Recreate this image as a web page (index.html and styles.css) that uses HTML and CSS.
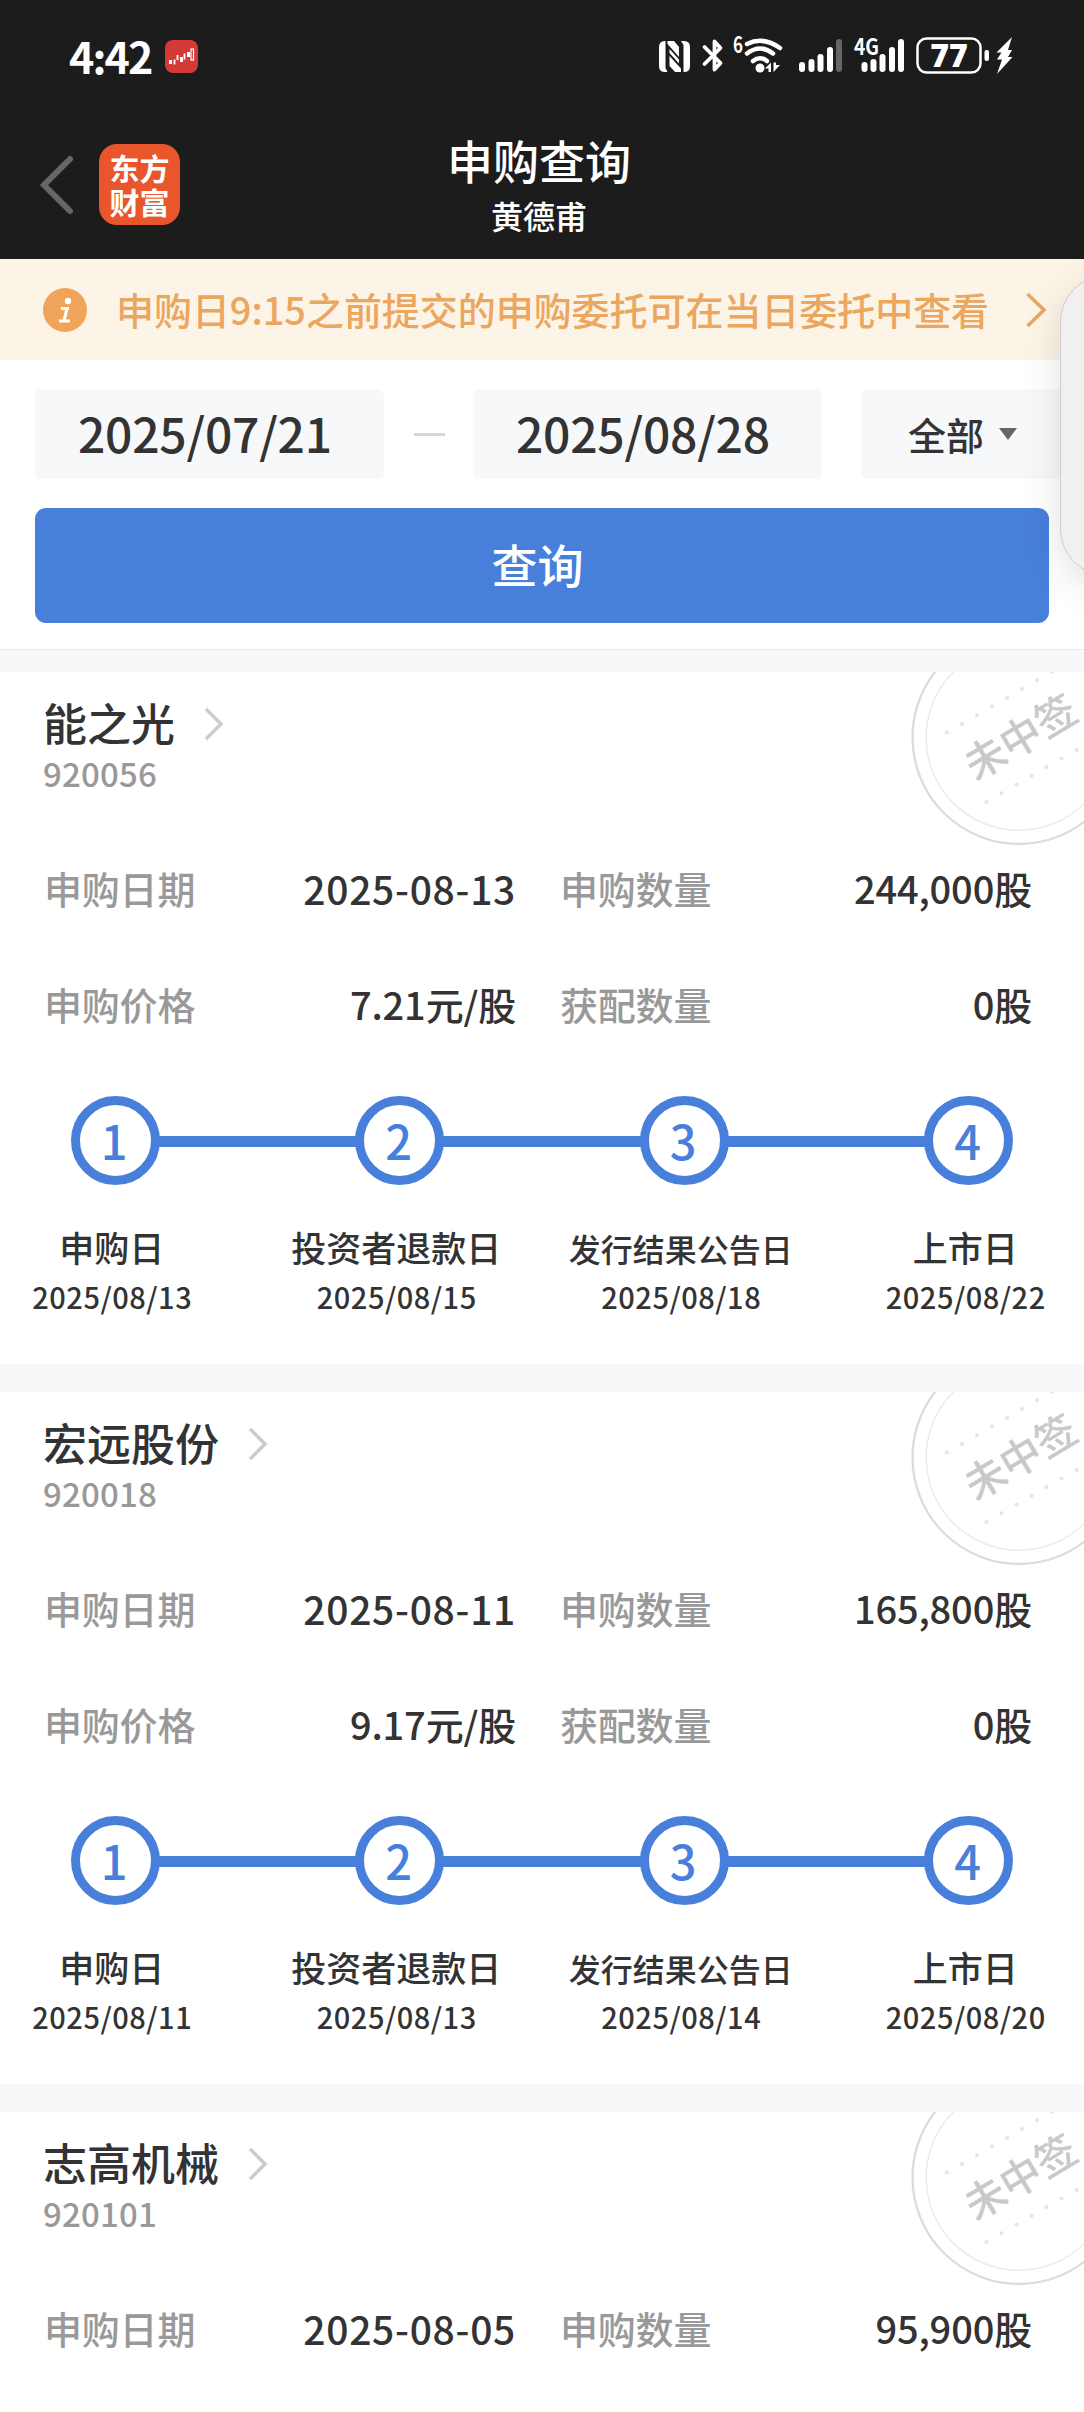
FILE: index.html
```html
<!DOCTYPE html>
<html lang="zh-CN">

<head>
    <meta charset="UTF-8">
    <meta name="viewport" content="width=device-width, initial-scale=1.0">
    <title>申购查询</title>
    <link rel="stylesheet" href="styles.css">
</head>

<body>
    <header class="header">
        <div class="status-bar">
            <div class="status-left">
                <span class="time">4:42</span>
                <svg class="app-icon" viewBox="0 0 33 33" width="33" height="33">
                    <rect width="33" height="33" rx="8" fill="#d43a35" />
                    <g fill="#fff">
                        <rect x="4" y="20" width="3" height="4" />
                        <rect x="15" y="17" width="3" height="5" />
                        <rect x="22" y="12" width="3" height="5" />
                    </g>
                    <g fill="none" stroke="#fff">
                        <path d="M9.500 19.500v5M12.500 15v5M19.500 13.500v6" stroke-width="1.800" />
                        <rect x="26" y="9" width="2.500" height="11" stroke-width="1.200" />
                    </g>
                </svg>
            </div>
            <svg class="status-icons" viewBox="0 0 360 50" width="360" height="50">
                <!-- nfc -->
                <g fill="#fff">
                    <path d="M15 11Q9 11 9 17V36Q9 42 15 42H17.500L15.500 38V11z" />
                    <path d="M34 42Q40 42 40 36V17Q40 11 34 11H31L33.500 15V42z" />
                    <path d="M17.500 11H24L29 17V27L17.500 14z" />
                    <path d="M31 42H25L19.500 36V26L31 38.500z" />
                    <path d="M19.500 19L29 29.500V33.500L19.500 23z" />
                </g>
                <!-- bluetooth -->
                <path d="M54.500 17L70.500 33L64.500 39.500V11.500L70.500 18L54.500 34" fill="none" stroke="#fff" stroke-width="3.800" stroke-linejoin="round" stroke-linecap="round" />
                <text x="83" y="23" textLength="10" lengthAdjust="spacingAndGlyphs" class="tiny-text">6</text>
                <!-- wifi -->
                <g fill="none" stroke="#fff" stroke-width="4.500" stroke-linecap="round">
                    <path d="M97 14Q113 6 130 18" />
                    <path d="M97 23.500Q110 13.500 123 23.500" />
                    <path d="M103 31Q110 25.500 117 31" />
                </g>
                <circle cx="110" cy="38" r="4.500" fill="#fff" />
                <path d="M115 38.500l6-6v9.500h-2.500v-3.500zM123.500 42v-9.500h2.500v2.500h4z" fill="#fff" />
                <!-- signal -->
                <g stroke="#fff" stroke-width="6" stroke-linecap="round">
                    <path d="M152 35v4M161.500 32v7M170.500 27v12M180 20v19" />
                    <path d="M189 12v27" stroke="#666" />
                    <path d="M214.500 35v4M223.500 32v7M232.500 27v12M242 20v19M251 12v27" />
                </g>
                <text x="204" y="25" textLength="25" lengthAdjust="spacingAndGlyphs" class="tiny-text">4G</text>
                <!-- battery -->
                <rect x="267.500" y="8.500" width="63" height="34" rx="9" fill="none" stroke="#fff" stroke-width="2.500" />
                <text x="299" y="37" text-anchor="middle" class="battery-text">77</text>
                <rect x="334.500" y="20" width="4.500" height="11" rx="2" fill="#fff" />
                <path d="M362 7L346.500 22.500h5l-4.500 7h5L347 44L362.500 27h-4.500l4-7h-4z" fill="#fff" />
            </svg>
        </div>
        <div class="nav">
            <div class="nav-left">
                <svg width="36" height="62" viewBox="0 0 36 62" fill="none" stroke="#666" stroke-width="6" stroke-linecap="round">
                    <path d="M31 5L5 31L31 57" />
                </svg>
                <div class="logo">东方<br>财富</div>
            </div>
            <div class="nav-title">
                <h1>申购查询</h1>
                <p>黄德甫</p>
            </div>
        </div>
    </header>

    <div class="notice">
        <svg width="44" height="44" viewBox="0 0 44 44">
            <circle cx="22" cy="22" r="22" fill="#f0a45a" />
            <circle cx="25" cy="13" r="3.200" fill="#fff" />
            <path d="M18 20.500h8M24 20l-3 13M16 33h11" fill="none" stroke="#fff" stroke-width="3.200" />
        </svg>
        <span class="notice-text">申购日9:15之前提交的申购委托可在当日委托中查看</span>
        <svg class="notice-arrow" width="22" height="36" viewBox="0 0 22 36" fill="none" stroke="#eba660" stroke-width="3.500">
            <path d="M2.500 2L19 18L2.500 34" />
        </svg>
    </div>

    <div class="filter">
        <div class="filter-row">
            <div class="date-box">2025/07/21</div>
            <span class="dash"></span>
            <div class="date-box">2025/08/28</div>
            <div class="select-box">全部<span class="caret"></span></div>
        </div>
        <button class="query-btn">查询</button>
    </div>

    <div id="list"></div>

    <div class="float-wrap">
        <div class="float-panel"></div>
    </div>

    <script>
        const stocks = [
            {
                name: '能之光', code: '920056', date: '2025-08-13', count: '244,000', price: '7.21',
                days: ['2025/08/13', '2025/08/15', '2025/08/18', '2025/08/22']
            },
            {
                name: '宏远股份', code: '920018', date: '2025-08-11', count: '165,800', price: '9.17',
                days: ['2025/08/11', '2025/08/13', '2025/08/14', '2025/08/20']
            },
            {
                name: '志高机械', code: '920101', date: '2025-08-05', count: '95,900'
            }
        ];
        const stepNames = ['申购日', '投资者退款日', '发行结果公告日', '上市日'];

        // two dotted lines parallel to the stamp text
        function dots(x, y, n) {
            let out = '';
            for (let i = 0; i < n; i++) {
                out += `<circle cx="${x + i * 15}" cy="${y - i * 8.7}" r="2.100" />`;
            }
            return out;
        }

        const stamp = `
            <svg class="stamp" width="174" height="175" viewBox="0 0 174 175">
                <circle cx="109" cy="65.500" r="106.500" fill="none" stroke="#dcdcdd" stroke-width="2.300" />
                <circle cx="109" cy="65.500" r="92.800" fill="none" stroke="#ebebec" stroke-width="1.500" />
                <g fill="#e6e6e7">${dots(37, 60.5, 8)}${dots(76.5, 130, 7)}</g>
                <text transform="translate(110.5 65) rotate(-31)" text-anchor="middle" y="15" class="stamp-text">未中签</text>
            </svg>`;

        function field(label, value) {
            return `<div class="field"><span class="label">${label}</span><span class="value">${value}</span></div>`;
        }

        function steps(days) {
            return `<div class="steps">${days.map((day, i) => `
                <div class="step">
                    <div class="circle">${i + 1}</div>
                    <div class="step-name${stepNames[i].length > 6 ? ' small' : ''}">${stepNames[i]}</div>
                    <div class="step-date">${day}</div>
                </div>`).join('')}</div>`;
        }

        document.getElementById('list').innerHTML = stocks.map(s => `
            <section class="card">
                ${stamp}
                <div class="name">${s.name}
                    <svg width="20" height="34" viewBox="0 0 20 34" fill="none" stroke="#ccc" stroke-width="3.500">
                        <path d="M2 2L17 17L2 32" />
                    </svg>
                </div>
                <div class="code">${s.code}</div>
                <div class="fields">
                    ${field('申购日期', `<span class="day">${s.date}</span>`)}
                    ${field('申购数量', s.count + '股')}
                    ${s.days ? field('申购价格', s.price + '元/股') + field('获配数量', '0股') : ''}
                </div>
                ${s.days ? steps(s.days) : ''}
            </section>`).join('');
    </script>
</body>

</html>
```

FILE: styles.css
```css
* {
    box-sizing: border-box;
}

body {
    margin: 0;
    height: 2412px;
    overflow: hidden;
    position: relative;
    background-color: #f7f8fa;
    color: #333;
    font-family: "Noto Sans CJK SC", sans-serif;
    font-weight: 500;
}

.header {
    height: 259px;
    background-color: #1c1c1c;
    color: #fff;
}

.status-bar {
    display: flex;
    justify-content: space-between;
    height: 112px;
    padding: 30px 70px 0 69px;
}

.status-left {
    display: flex;
    align-items: center;
    gap: 13px;
    height: 53px;
}

.time {
    font-size: 43px;
    font-weight: 700;
    line-height: 51px;
    letter-spacing: -1.9px;
    padding-bottom: 2px;
}

.status-icons {
    overflow: visible;
    margin-right: 4px;
}

.tiny-text {
    font-size: 22px;
    font-weight: 700;
    fill: #fff;
}

.battery-text {
    font-family: "Open Sans", sans-serif;
    font-size: 32px;
    font-weight: 800;
    fill: #fff;
}

.nav {
    display: grid;
    grid-template-columns: 1fr auto 1fr;
    height: 147px;
    padding: 0 45px 0 39px;
}

.nav-left {
    display: flex;
    align-items: center;
    gap: 24px;
    height: 145px;
}

.logo {
    width: 81px;
    height: 81px;
    padding-top: 6px;
    border-radius: 18px;
    background-color: #e9562b;
    font-size: 30px;
    font-weight: 700;
    line-height: 34px;
    text-align: center;
}

.nav-title {
    text-align: center;
    padding-top: 19px;
}

.nav-title h1 {
    margin: 0;
    font-size: 46px;
    font-weight: 500;
    line-height: 56px;
}

.nav-title p {
    margin: 6px 0 0;
    font-size: 32px;
    line-height: 44px;
}

.notice {
    display: flex;
    align-items: center;
    height: 101px;
    padding: 0 37px 0 43px;
    background-color: #fdf4e8;
    color: #eba660;
}

.notice-text {
    margin-left: 29px;
    padding-bottom: 2px;
    font-size: 38px;
    line-height: 50px;
    letter-spacing: -0.05px;
    white-space: nowrap;
}

.notice-arrow {
    margin-left: auto;
}

.filter {
    height: 290px;
    padding: 29px 22px 0 35px;
    background-color: #fff;
    border-bottom: 1px solid #e9eaec;
}

.filter-row {
    display: flex;
    align-items: center;
}

.date-box {
    width: 349px;
    height: 90px;
    padding-left: 43px;
    border-radius: 6px;
    background-color: #f7f8fa;
    font-size: 48px;
    line-height: 87px;
    letter-spacing: -0.25px;
}

.dash {
    width: 31px;
    height: 3px;
    margin: 0 28px 0 30px;
    background-color: #d5d6da;
}

.select-box {
    display: flex;
    align-items: center;
    width: 201px;
    height: 90px;
    margin-left: 39px;
    padding-left: 47px;
    border-radius: 6px;
    background-color: #f7f8fa;
    font-size: 38px;
    line-height: 88px;
}

.caret {
    margin-left: 15px;
    border: 9px solid transparent;
    border-top: 12px solid #666;
    border-bottom: 0;
}

.query-btn {
    display: block;
    width: 1014px;
    height: 115px;
    margin-top: 29px;
    padding: 0 9px 6px 0;
    border: none;
    border-radius: 11px;
    background-color: #487fdb;
    color: #fff;
    font-family: inherit;
    font-size: 46px;
    font-weight: 500;
}

#list {
    padding-top: 22px;
}

.card {
    position: relative;
    height: 692px;
    margin-bottom: 28px;
    padding-top: 20px;
    background-color: #fff;
    overflow: hidden;
}

.card:last-child {
    height: 300px;
    margin-bottom: 0;
}

.stamp {
    position: absolute;
    top: 0;
    right: 0;
}

.stamp-text {
    font-size: 41px;
    fill: #c8c9cb;
}

.name {
    display: flex;
    align-items: center;
    gap: 29px;
    height: 60px;
    padding-left: 43px;
    font-size: 44px;
    line-height: 60px;
}

.name svg {
    margin-top: 3px;
}

.code {
    padding-left: 43px;
    font-size: 33px;
    line-height: 43px;
    letter-spacing: 0.2px;
    color: #999;
}

.fields {
    display: grid;
    grid-template-columns: 472px 472px;
    column-gap: 44px;
    margin-top: 35px;
    padding-left: 44px;
}

.field {
    display: flex;
    justify-content: space-between;
    height: 116px;
    font-size: 38px;
    line-height: 116px;
}

.label {
    color: #999;
    letter-spacing: -0.2px;
}

.value {
    letter-spacing: -0.15px;
}

.day {
    font-size: 39px;
    letter-spacing: 0.7px;
}

.steps {
    display: grid;
    grid-template-columns: repeat(4, 284.5px);
    width: 1138px;
    margin: 34px 0 0 -27px;
}

.step {
    display: flex;
    flex-direction: column;
    align-items: center;
    position: relative;
}

/* line to the next circle */
.step:not(:last-child)::after {
    content: "";
    position: absolute;
    top: 40px;
    left: 183px;
    width: 204px;
    height: 11px;
    background-color: #487fdb;
}

.circle {
    width: 89px;
    height: 89px;
    border: 9px solid #487fdb;
    border-radius: 50%;
    padding-right: 2px;
    color: #487fdb;
    font-size: 47px;
    line-height: 70px;
    text-align: center;
}

.step-name {
    margin: 37px 7px 0 0;
    font-size: 35px;
    line-height: 50px;
}

.step-name.small {
    padding-top: 2px;
    font-size: 32px;
    line-height: 48px;
}

.step-date {
    margin-right: 6px;
    font-size: 29px;
    line-height: 49px;
    letter-spacing: 0.5px;
}

/* system side panel that sticks out from the right edge */
.float-wrap {
    position: absolute;
    top: 259px;
    right: 0;
    width: 90px;
    height: 390px;
    overflow: hidden;
}

.float-panel {
    width: 120px;
    height: 301px;
    margin: 16px 0 0 66px;
    border: 1.5px solid #cdcdcd;
    border-radius: 47px;
    background-color: #f0f0f0;
    box-shadow: 0 10px 40px rgba(0, 0, 0, 0.12);
}
```
